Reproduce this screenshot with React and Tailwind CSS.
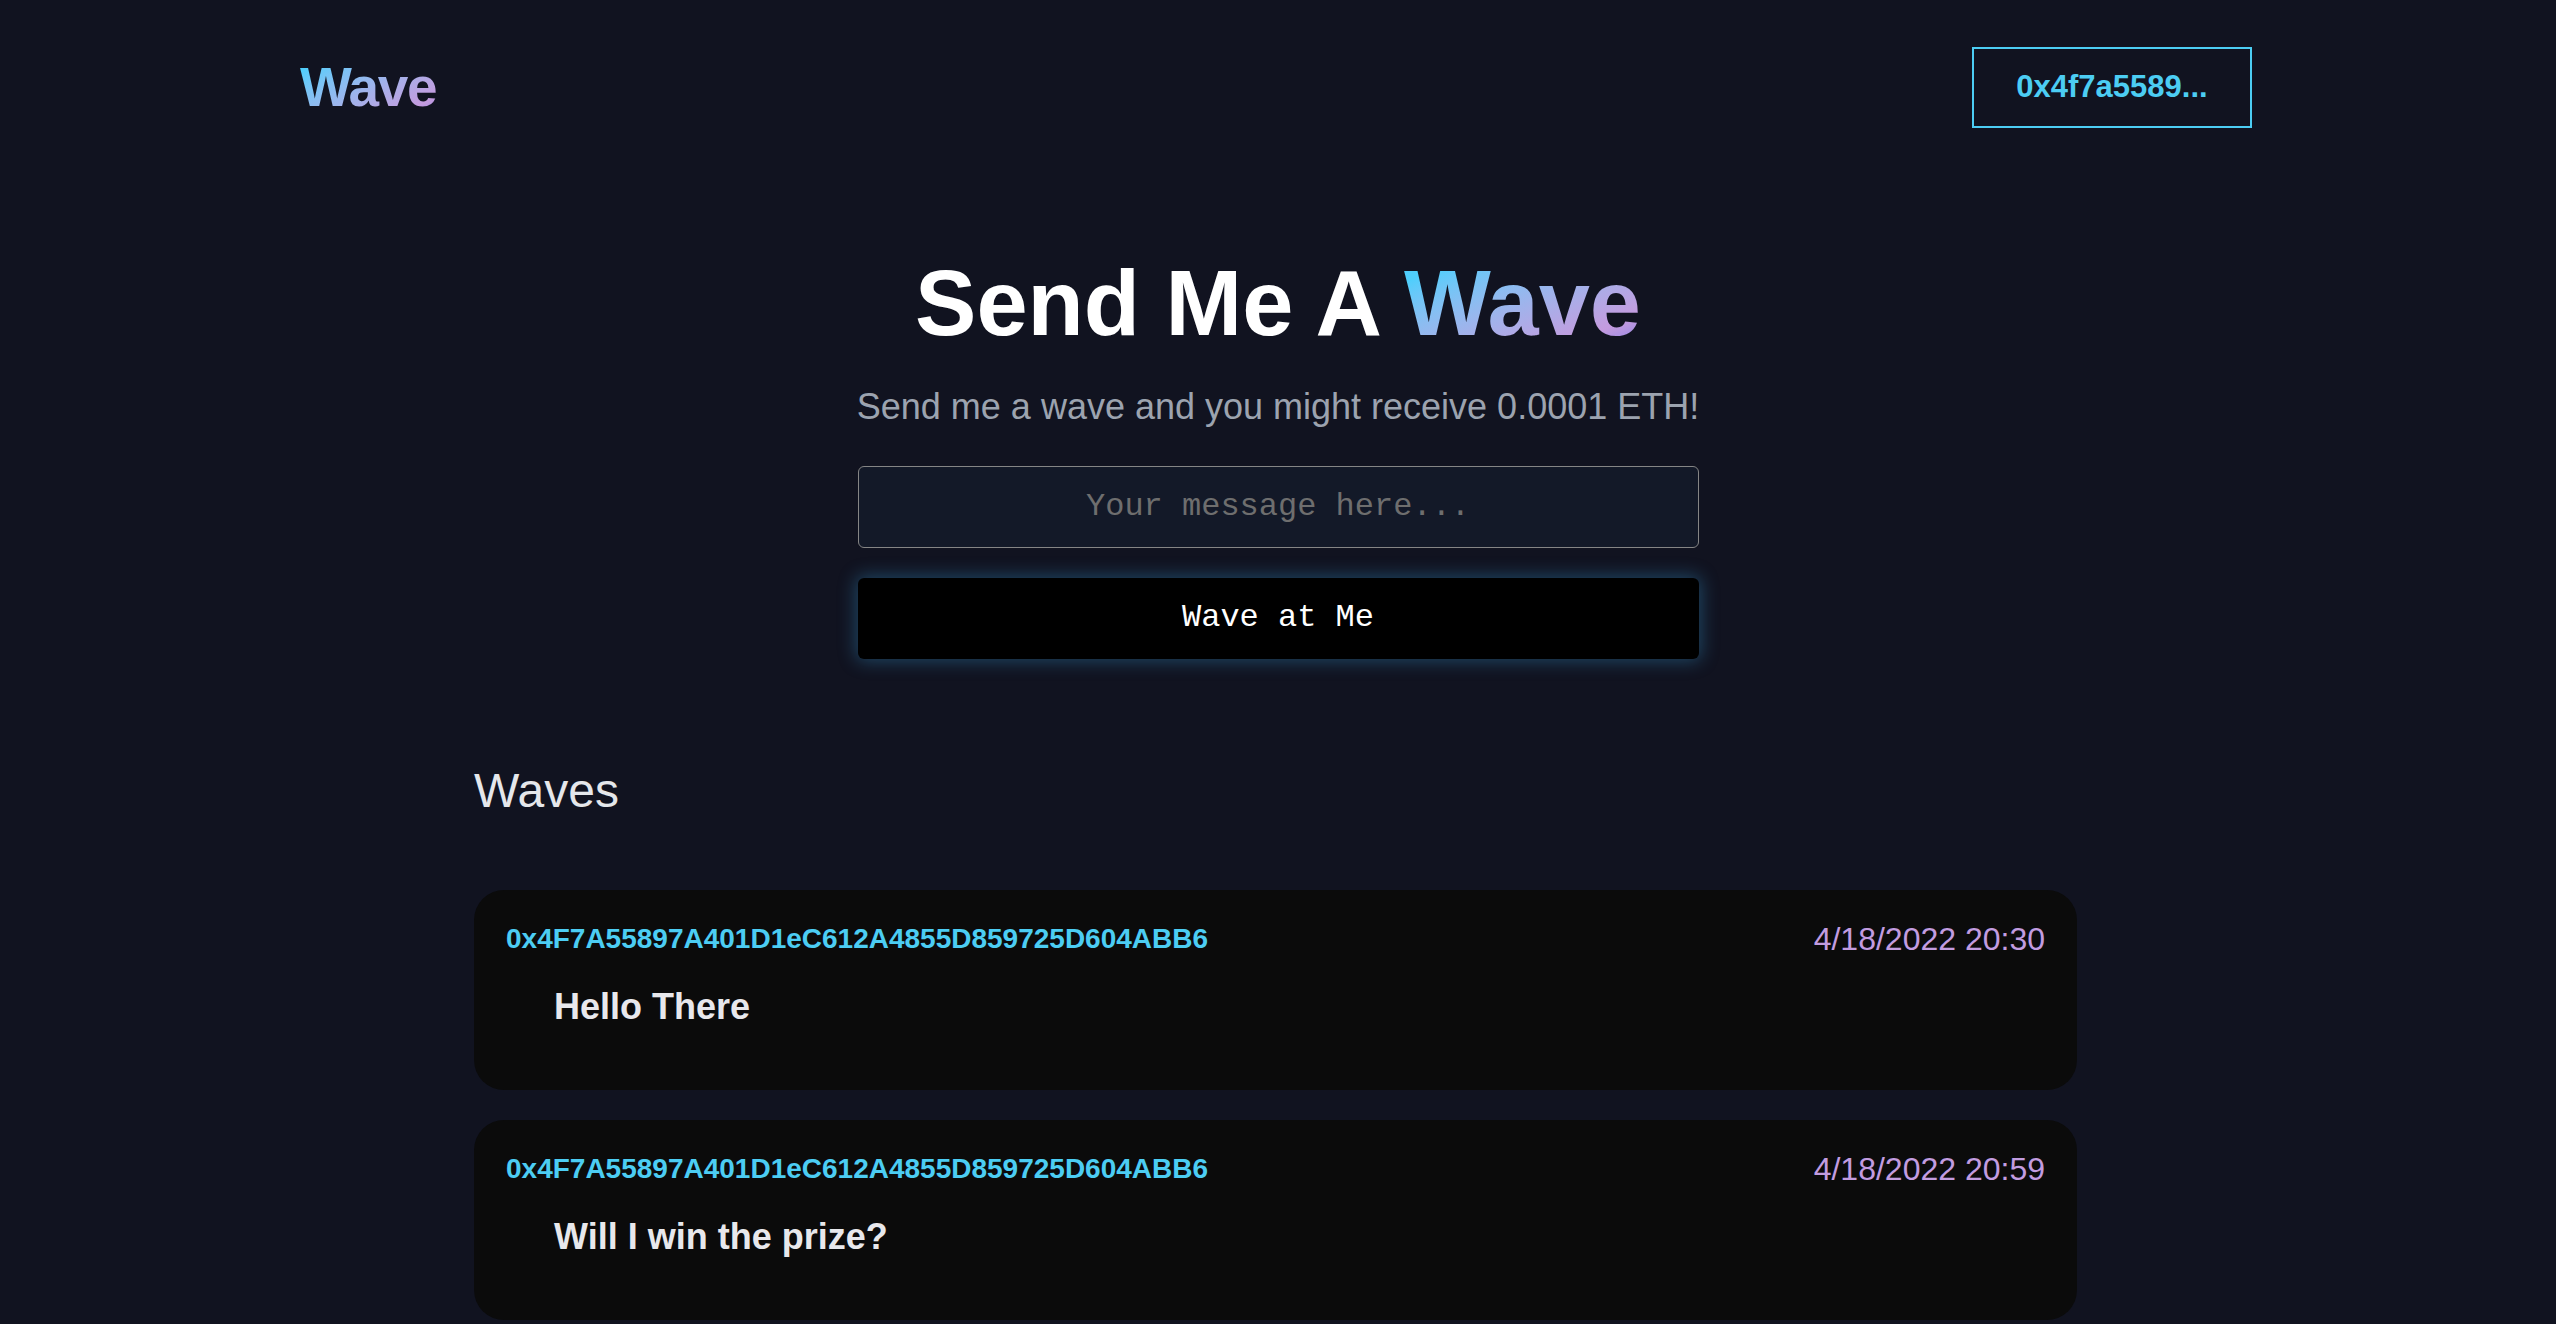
import { useState } from 'react';

const waves = [
  {
    id: 1,
    address: '0x4F7A55897A401D1eC612A4855D859725D604ABB6',
    time: '4/18/2022 20:30',
    message: 'Hello There',
  },
  {
    id: 2,
    address: '0x4F7A55897A401D1eC612A4855D859725D604ABB6',
    time: '4/18/2022 20:59',
    message: 'Will I win the prize?',
  },
];

const sans = "font-['Liberation_Sans','Helvetica_Neue',Arial,sans-serif]";
const mono = "font-['Liberation_Mono','DejaVu_Sans_Mono',monospace]";
const gradientText =
  'bg-linear-to-br from-[#4fcefc] from-15% via-[#c49bde] via-80% to-[#7e7ce8] bg-clip-text text-transparent';

const WaveCard = ({ wave }) => (
  <div className="rounded-[30px] bg-[#0b0b0b] px-8 pt-7 pb-14">
    {/* Header row */}
    <div className="flex items-start justify-between">
      <span className="text-[28px] leading-[1.5] font-bold text-[#4ccdf3]">{wave.address}</span>
      <span className="text-[32px] leading-[1.35] text-[#c29ce0]">{wave.time}</span>
    </div>
    <p className="mt-[19px] pl-12 text-[36px] leading-[1.5] font-bold text-[#e8e8ec]">{wave.message}</p>
  </div>
);

export default function App() {
  const [message, setMessage] = useState('');

  return (
    <div className={`min-h-screen bg-[#111320] ${sans}`}>
      {/* Nav */}
      <header className="flex items-center justify-between pt-[46px] pl-[300px] pr-[304px]">
        <span className={`text-[55px] leading-[1.5] font-bold tracking-tight ${gradientText}`}>Wave</span>
        <button className="flex h-[81px] w-[280px] items-center justify-center border-2 border-[#4ccdf3] text-[31px] font-bold text-[#4ccdf3]">
          0x4f7a5589...
        </button>
      </header>

      {/* Hero */}
      <section className="mx-auto mt-[128px] flex w-[841px] flex-col items-center">
        <h1 className="text-[92px] leading-none font-bold whitespace-nowrap text-white">
          Send Me A <span className={gradientText}>Wave</span>
        </h1>
        <p className="mt-[40px] text-[36px] leading-none whitespace-nowrap text-[#9ca3af]">
          Send me a wave and you might receive 0.0001 ETH!
        </p>
        <input
          value={message}
          onChange={(e) => setMessage(e.target.value)}
          placeholder="Your message here..."
          className={`mt-[41px] h-[82px] w-full rounded-md border border-[#858585] bg-[#131928] text-center text-[32px] text-gray-200 outline-none placeholder:text-[#6e6e6e] ${mono}`}
        />
        <button
          className={`mt-[30px] h-[81px] w-full rounded-md bg-black text-[32px] text-white shadow-[0_0_18px_2px_rgba(56,170,230,0.35)] ${mono}`}
        >
          Wave at Me
        </button>
      </section>

      {/* Waves list */}
      <section className="ml-[474px] w-[1603px] pb-10">
        <h2 className="mt-[108px] text-[48px] leading-none text-[#e5e7eb]">Waves</h2>
        <div className="mt-[75px] flex flex-col gap-[30px]">
          {waves.map((wave) => (
            <WaveCard key={wave.id} wave={wave} />
          ))}
        </div>
      </section>
    </div>
  );
}
